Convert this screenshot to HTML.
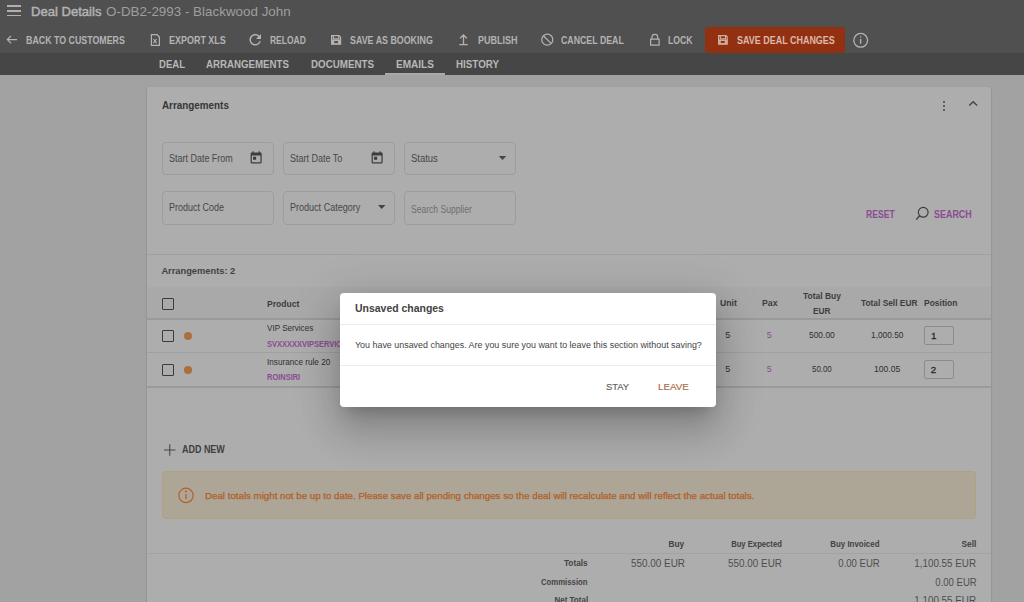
<!DOCTYPE html>
<html><head><meta charset="utf-8">
<style>
*{margin:0;padding:0;box-sizing:border-box}
html,body{width:1024px;height:602px;overflow:hidden}
body{position:relative;background:#a2a2a2;font-family:"Liberation Sans",sans-serif}
.t{position:absolute;white-space:nowrap;line-height:1}
.a{position:absolute}
svg{position:absolute;overflow:visible}
</style></head><body>
<!-- header -->
<div class="a" style="left:0;top:0;width:1024px;height:53px;background:#505050"></div>
<div class="a" style="left:0;top:53px;width:1024px;height:22px;background:#464646"></div>
<div class="a" style="left:385px;top:73px;width:60px;height:2px;background:#a9a9a9"></div>
<!-- hamburger -->
<div class="a" style="left:7px;top:5.2px;width:14px;height:1.6px;background:#b0b0b0"></div>
<div class="a" style="left:7px;top:10.2px;width:14px;height:1.6px;background:#b0b0b0"></div>
<div class="a" style="left:7px;top:14.8px;width:14px;height:1.6px;background:#b0b0b0"></div>
<!-- save button -->
<div class="a" style="left:705px;top:27px;width:140px;height:26px;background:#933012;border-radius:3px"></div>
<!-- toolbar icons -->
<svg style="left:0;top:0" width="1024" height="60" fill="none" stroke="#b3b3b3" stroke-width="1.3">
  <path d="M7.3 39.6 H17 M11 35.9 L7.3 39.6 L11 43.3" stroke-width="1.2"/>
  <path d="M151.4 34.6 H157 L159.4 37 V45.4 H151.4 Z" stroke-width="1.2"/>
  <path d="M153.4 39 L156.6 43.2 M156.6 39 L153.4 43.2" stroke-width="1.1"/>
  <path transform="translate(246.6 31.1) scale(0.72)" fill="#b3b3b3" stroke="none" d="M17.65 6.35C16.2 4.9 14.21 4 12 4c-4.42 0-7.99 3.58-7.99 8s3.57 8 7.99 8c3.73 0 6.84-2.55 7.73-6h-2.08c-.82 2.33-3.04 4-5.65 4-3.31 0-6-2.69-6-6s2.69-6 6-6c1.66 0 3.14.69 4.22 1.78L13 11h7V4l-2.35 2.35z"/>
  <g stroke-width="1.2">
  <path d="M331.6 35.6 H339 L340.6 37.2 V44.2 H331.6 Z"/>
  <path d="M333.3 35.6 V38.8 H338.8 V35.6"/>
  </g>
  <path fill="#b3b3b3" stroke="none" fill-rule="evenodd" d="M331.6 39.6 H340.6 V44.2 H331.6 Z M334.2 41 H338 V43.2 H334.2 Z"/>
  <path d="M463.5 44 V35.2 M460.2 38.3 L463.5 35 L466.8 38.3" stroke-width="1.3"/>
  <path d="M459.3 44.6 H467.7" stroke-width="1.3"/>
  <circle cx="547.3" cy="39.7" r="5.5" stroke-width="1.25"/>
  <path d="M543.6 36 L551 43.4" stroke-width="1.25"/>
  <path d="M650.6 39.1 H659.1 V45.1 H650.6 Z M652 39.1 V37.2 A2.85 2.85 0 0 1 657.7 37.2 V39.1" stroke-width="1.2"/>
  <g stroke="#cdae9e" stroke-width="1.2">
  <path d="M718.6 35.6 H726 L727.2 36.8 V44.2 H718.6 Z"/>
  <path d="M720.3 35.6 V38.8 H725.6 V35.6"/>
  </g>
  <path fill="#cdae9e" stroke="none" fill-rule="evenodd" d="M718.6 39.6 H727.2 V44.2 H718.6 Z M720.8 41 H724.7 V43 H720.8 Z"/>
  <circle cx="860.7" cy="40.3" r="6.9" stroke-width="1.3"/>
  <path d="M860.6 38.9 V43.8" stroke-width="1.4"/>
  <circle cx="860.6" cy="37" r="0.75" fill="#b3b3b3" stroke="none"/>
</svg>

<!-- card -->
<div class="a" style="left:147px;top:87px;width:844px;height:600px;background:#adadad;border-radius:3px;box-shadow:0 1px 2px rgba(0,0,0,0.25)"></div>
<!-- kebab -->
<div class="a" style="left:943px;top:100.5px;width:2px;height:2px;background:#454545;border-radius:50%"></div>
<div class="a" style="left:943px;top:105px;width:2px;height:2px;background:#454545;border-radius:50%"></div>
<div class="a" style="left:943px;top:109.4px;width:2px;height:2px;background:#454545;border-radius:50%"></div>
<svg style="left:0;top:0" width="1024" height="602" fill="none" stroke="#3d3d3d">
  <path d="M969.3 105.6 L973.2 101.7 L977.1 105.6" stroke-width="1.4" stroke="#454545"/>
  <!-- search icon -->
  <circle cx="923.2" cy="212.3" r="4.9" stroke-width="1.2"/>
  <path d="M919.7 215.8 L916.2 219.6" stroke-width="1.4"/>
  <!-- calendars -->
  <path transform="translate(248.75 150.6) scale(0.615)" fill="#3d3d3d" stroke="none" d="M19 3h-1V1h-2v2H8V1H6v2H5c-1.11 0-1.99.9-1.99 2L3 19c0 1.1.89 2 2 2h14c1.1 0 2-.9 2-2V5c0-1.1-.9-2-2-2zm0 16H5V8h14v11zM7 10h5v5H7z"/>
  <path transform="translate(369.75 150.6) scale(0.615)" fill="#3d3d3d" stroke="none" d="M19 3h-1V1h-2v2H8V1H6v2H5c-1.11 0-1.99.9-1.99 2L3 19c0 1.1.89 2 2 2h14c1.1 0 2-.9 2-2V5c0-1.1-.9-2-2-2zm0 16H5V8h14v11zM7 10h5v5H7z"/>
  <!-- dropdown arrows -->
  <path d="M498.8 156.1 L506.2 156.1 L502.5 159.9 Z" fill="#444" stroke="none"/>
  <path d="M378 205.1 L385.4 205.1 L381.7 208.9 Z" fill="#444" stroke="none"/>
  <!-- plus add new -->
  <path d="M164 450 H175.5 M169.75 444.25 V455.75" stroke-width="1.1" stroke="#474747"/>
</svg>
<!-- filter fields -->
<div class="a" style="left:162px;top:142px;width:112px;height:33px;border:1px solid #9d9d9d;border-radius:4px"></div>
<div class="a" style="left:283px;top:142px;width:112px;height:33px;border:1px solid #9d9d9d;border-radius:4px"></div>
<div class="a" style="left:404px;top:142px;width:112px;height:33px;border:1px solid #9d9d9d;border-radius:4px"></div>
<div class="a" style="left:162px;top:191px;width:112px;height:34px;border:1px solid #9d9d9d;border-radius:4px"></div>
<div class="a" style="left:283px;top:191px;width:112px;height:34px;border:1px solid #9d9d9d;border-radius:4px"></div>
<div class="a" style="left:404px;top:191px;width:112px;height:34px;border:1px solid #9d9d9d;border-radius:4px"></div>

<!-- section divider -->
<div class="a" style="left:147px;top:254px;width:844px;height:1px;background:#a0a0a0"></div>
<!-- table header band -->
<div class="a" style="left:147px;top:287px;width:844px;height:32px;background:#a9a9a9"></div>
<div class="a" style="left:147px;top:318px;width:844px;height:2px;background:#9a9a9a"></div>
<div class="a" style="left:147px;top:352px;width:844px;height:1px;background:#a0a0a0"></div>
<div class="a" style="left:147px;top:386px;width:844px;height:2px;background:#9a9a9a"></div>
<!-- checkboxes -->
<div class="a" style="left:162px;top:298px;width:12px;height:12px;border:1.5px solid #3a3a3a;border-radius:1px"></div>
<div class="a" style="left:162px;top:330px;width:12px;height:12px;border:1.5px solid #3a3a3a;border-radius:1px"></div>
<div class="a" style="left:162px;top:364px;width:12px;height:12px;border:1.5px solid #3a3a3a;border-radius:1px"></div>
<div class="a" style="left:184px;top:332px;width:8px;height:8px;background:#ad6e3a;border-radius:50%"></div>
<div class="a" style="left:184px;top:366px;width:8px;height:8px;background:#ad6e3a;border-radius:50%"></div>
<!-- position inputs -->
<div class="a" style="left:924px;top:326px;width:30px;height:19px;border:1px solid #8c8c8c;border-radius:2px"></div>
<div class="a" style="left:924px;top:360px;width:30px;height:19px;border:1px solid #8c8c8c;border-radius:2px"></div>

<!-- warning -->
<div class="a" style="left:162px;top:471px;width:814px;height:48px;background:#ada596;border:1px solid #b0a17f;border-radius:4px"></div>
<svg style="left:0;top:0" width="1024" height="602" fill="none" stroke="#b4612b">
  <circle cx="186" cy="495.4" r="7.2" stroke-width="1.2"/>
  <path d="M186 494 V499" stroke-width="1.3"/>
  <circle cx="186" cy="491.4" r="0.6" fill="#b4612b"/>
</svg>
<!-- totals divider -->
<div class="a" style="left:147px;top:553px;width:844px;height:1px;background:#a3a3a3"></div>

<div class="t" style="left:31.00px;transform-origin:left top;top:6.30px;font-size:12.4px;font-weight:400;color:#b3b3b3;transform:scaleX(1.0549);-webkit-text-stroke:0.45px #b3b3b3;">Deal Details</div><div class="t" style="left:106.00px;transform-origin:left top;top:6.13px;font-size:12.6px;font-weight:400;color:#9f9f9f;transform:scaleX(1.0639);">O-DB2-2993 - Blackwood John</div><div class="t" style="left:26.00px;transform-origin:left top;top:36.03px;font-size:10px;font-weight:700;color:#b3b3b3;transform:scaleX(0.8831);">BACK TO CUSTOMERS</div><div class="t" style="left:169.00px;transform-origin:left top;top:36.03px;font-size:10px;font-weight:700;color:#b3b3b3;transform:scaleX(0.8966);">EXPORT XLS</div><div class="t" style="left:270.00px;transform-origin:left top;top:36.03px;font-size:10px;font-weight:700;color:#b3b3b3;transform:scaleX(0.8468);">RELOAD</div><div class="t" style="left:350.00px;transform-origin:left top;top:36.03px;font-size:10px;font-weight:700;color:#b3b3b3;transform:scaleX(0.8869);">SAVE AS BOOKING</div><div class="t" style="left:477.50px;transform-origin:left top;top:36.03px;font-size:10px;font-weight:700;color:#b3b3b3;transform:scaleX(0.9022);">PUBLISH</div><div class="t" style="left:561.30px;transform-origin:left top;top:36.03px;font-size:10px;font-weight:700;color:#b3b3b3;transform:scaleX(0.8784);">CANCEL DEAL</div><div class="t" style="left:668.30px;transform-origin:left top;top:36.03px;font-size:10px;font-weight:700;color:#b3b3b3;transform:scaleX(0.8672);">LOCK</div><div class="t" style="left:737.00px;transform-origin:left top;top:36.03px;font-size:10px;font-weight:700;color:#d9b9a9;transform:scaleX(0.8965);">SAVE DEAL CHANGES</div><div class="t" style="left:158.70px;transform-origin:left top;top:59.67px;font-size:10.2px;font-weight:700;color:#b8b8b8;transform:scaleX(0.9397);">DEAL</div><div class="t" style="left:206.40px;transform-origin:left top;top:59.67px;font-size:10.2px;font-weight:700;color:#b8b8b8;transform:scaleX(0.9518);">ARRANGEMENTS</div><div class="t" style="left:311.00px;transform-origin:left top;top:59.67px;font-size:10.2px;font-weight:700;color:#b8b8b8;transform:scaleX(0.9608);">DOCUMENTS</div><div class="t" style="left:395.80px;transform-origin:left top;top:59.67px;font-size:10.2px;font-weight:700;color:#b8b8b8;transform:scaleX(0.9845);">EMAILS</div><div class="t" style="left:455.60px;transform-origin:left top;top:59.67px;font-size:10.2px;font-weight:700;color:#b8b8b8;transform:scaleX(0.9631);">HISTORY</div><div class="t" style="left:162.00px;transform-origin:left top;top:100.70px;font-size:10.4px;font-weight:700;color:#363636;transform:scaleX(0.9494);">Arrangements</div><div class="t" style="left:168.80px;transform-origin:left top;top:154.03px;font-size:10px;font-weight:400;color:#474747;transform:scaleX(0.8969);">Start Date From</div><div class="t" style="left:289.80px;transform-origin:left top;top:154.03px;font-size:10px;font-weight:400;color:#474747;transform:scaleX(0.8990);">Start Date To</div><div class="t" style="left:410.80px;transform-origin:left top;top:154.03px;font-size:10px;font-weight:400;color:#474747;transform:scaleX(0.9469);">Status</div><div class="t" style="left:168.80px;transform-origin:left top;top:202.84px;font-size:10px;font-weight:400;color:#474747;transform:scaleX(0.9012);">Product Code</div><div class="t" style="left:289.80px;transform-origin:left top;top:202.84px;font-size:10px;font-weight:400;color:#474747;transform:scaleX(0.9034);">Product Category</div><div class="t" style="left:410.80px;transform-origin:left top;top:204.84px;font-size:10px;font-weight:400;color:#6e6e6e;transform:scaleX(0.8540);">Search Supplier</div><div class="t" style="left:866.00px;transform-origin:left top;top:209.63px;font-size:10px;font-weight:700;color:#8a4c92;transform:scaleX(0.8630);">RESET</div><div class="t" style="left:933.80px;transform-origin:left top;top:209.63px;font-size:10px;font-weight:700;color:#8a4c92;transform:scaleX(0.8951);">SEARCH</div><div class="t" style="left:161.40px;transform-origin:left top;top:266.83px;font-size:9.3px;font-weight:700;color:#424242;">Arrangements: 2</div><div class="t" style="left:267.00px;transform-origin:left top;top:298.57px;font-size:9.6px;font-weight:700;color:#3d3d3d;transform:scaleX(0.8902);">Product</div><div class="t" style="left:267.00px;transform-origin:left top;top:324.18px;font-size:9px;font-weight:400;color:#2f2f2f;transform:scaleX(0.9001);">VIP Services</div><div class="t" style="left:267.00px;transform-origin:left top;top:339.51px;font-size:9.2px;font-weight:700;color:#8a4c92;transform:scaleX(0.8141);">SVXXXXXVIPSERVICES</div><div class="t" style="left:267.00px;transform-origin:left top;top:358.38px;font-size:9px;font-weight:400;color:#2f2f2f;transform:scaleX(0.9093);">Insurance rule 20</div><div class="t" style="left:267.00px;transform-origin:left top;top:373.01px;font-size:9.2px;font-weight:700;color:#8a4c92;transform:scaleX(0.8122);">ROINSIRI</div><div class="t" style="left:720.00px;transform-origin:left top;top:298.07px;font-size:9.6px;font-weight:700;color:#3d3d3d;transform:scaleX(0.8993);">Unit</div><div class="t" style="left:761.50px;transform-origin:left top;top:298.07px;font-size:9.6px;font-weight:700;color:#3d3d3d;transform:scaleX(0.9066);">Pax</div><div class="t" style="left:802.60px;transform-origin:left top;top:290.87px;font-size:9.6px;font-weight:700;color:#3d3d3d;transform:scaleX(0.8829);">Total Buy</div><div class="t" style="left:812.90px;transform-origin:left top;top:305.87px;font-size:9.6px;font-weight:700;color:#3d3d3d;transform:scaleX(0.8608);">EUR</div><div class="t" style="left:860.70px;transform-origin:left top;top:298.07px;font-size:9.6px;font-weight:700;color:#3d3d3d;transform:scaleX(0.8704);">Total Sell EUR</div><div class="t" style="left:924.30px;transform-origin:left top;top:298.07px;font-size:9.6px;font-weight:700;color:#3d3d3d;transform:scaleX(0.8843);">Position</div><div class="t" style="left:725.20px;transform-origin:left top;top:331.08px;font-size:9px;font-weight:400;color:#2f2f2f;">5</div><div class="t" style="left:766.80px;transform-origin:left top;top:331.08px;font-size:9px;font-weight:400;color:#8a4c92;">5</div><div class="t" style="left:808.60px;transform-origin:left top;top:331.08px;font-size:9px;font-weight:400;color:#2f2f2f;transform:scaleX(0.9356);">500.00</div><div class="t" style="left:871.00px;transform-origin:left top;top:331.08px;font-size:9px;font-weight:400;color:#2f2f2f;transform:scaleX(0.9259);">1,000.50</div><div class="t" style="left:931.00px;transform-origin:left top;top:331.40px;font-size:9.8px;font-weight:400;color:#2a2a2a;-webkit-text-stroke:0.3px #2a2a2a;">1</div><div class="t" style="left:725.20px;transform-origin:left top;top:364.78px;font-size:9px;font-weight:400;color:#2f2f2f;">5</div><div class="t" style="left:766.80px;transform-origin:left top;top:364.78px;font-size:9px;font-weight:400;color:#8a4c92;">5</div><div class="t" style="left:811.60px;transform-origin:left top;top:364.78px;font-size:9px;font-weight:400;color:#2f2f2f;transform:scaleX(0.8747);">50.00</div><div class="t" style="left:874.20px;transform-origin:left top;top:364.78px;font-size:9px;font-weight:400;color:#2f2f2f;transform:scaleX(0.9543);">100.05</div><div class="t" style="left:930.80px;transform-origin:left top;top:365.10px;font-size:9.8px;font-weight:400;color:#2a2a2a;-webkit-text-stroke:0.3px #2a2a2a;">2</div><div class="t" style="left:181.70px;transform-origin:left top;top:445.07px;font-size:10.2px;font-weight:700;color:#404040;transform:scaleX(0.8795);">ADD NEW</div><div class="t" style="left:204.60px;transform-origin:left top;top:491.00px;font-size:9.8px;font-weight:400;color:#b0602a;transform:scaleX(0.9917);-webkit-text-stroke:0.25px #b0602a;">Deal totals might not be up to date. Please save all pending changes so the deal will recalculate and will reflect the actual totals.</div><div class="t" style="right:339.40px;transform-origin:right top;top:540.02px;font-size:8.6px;font-weight:700;color:#424242;transform:scaleX(0.9692);">Buy</div><div class="t" style="right:242.00px;transform-origin:right top;top:540.02px;font-size:8.6px;font-weight:700;color:#424242;transform:scaleX(0.8917);">Buy Expected</div><div class="t" style="right:144.60px;transform-origin:right top;top:540.02px;font-size:8.6px;font-weight:700;color:#424242;transform:scaleX(0.9201);">Buy Invoiced</div><div class="t" style="right:47.70px;transform-origin:right top;top:540.02px;font-size:8.6px;font-weight:700;color:#424242;transform:scaleX(0.9640);">Sell</div><div class="t" style="right:436.00px;transform-origin:right top;top:559.32px;font-size:8.6px;font-weight:700;color:#444444;transform:scaleX(0.9624);">Totals</div><div class="t" style="right:436.00px;transform-origin:right top;top:578.42px;font-size:8.6px;font-weight:700;color:#444444;transform:scaleX(0.9054);">Commission</div><div class="t" style="right:436.00px;transform-origin:right top;top:595.72px;font-size:8.6px;font-weight:700;color:#444444;transform:scaleX(0.9335);">Net Total</div><div class="t" style="right:339.40px;transform-origin:right top;top:557.89px;font-size:11px;font-weight:400;color:#4d4d4d;transform:scaleX(0.8991);">550.00 EUR</div><div class="t" style="right:242.00px;transform-origin:right top;top:557.89px;font-size:11px;font-weight:400;color:#4d4d4d;transform:scaleX(0.8991);">550.00 EUR</div><div class="t" style="right:144.60px;transform-origin:right top;top:557.89px;font-size:11px;font-weight:400;color:#4d4d4d;transform:scaleX(0.8670);">0.00 EUR</div><div class="t" style="right:47.70px;transform-origin:right top;top:557.89px;font-size:11px;font-weight:400;color:#4d4d4d;transform:scaleX(0.8955);">1,100.55 EUR</div><div class="t" style="right:47.70px;transform-origin:right top;top:577.19px;font-size:11px;font-weight:400;color:#4d4d4d;transform:scaleX(0.8670);">0.00 EUR</div><div class="t" style="right:47.70px;transform-origin:right top;top:595.19px;font-size:11px;font-weight:400;color:#4d4d4d;transform:scaleX(0.8955);">1,100.55 EUR</div>

<!-- modal -->
<div class="a" style="left:340px;top:293px;width:376px;height:114px;background:#ffffff;border-radius:4px;box-shadow:0 11px 15px -7px rgba(0,0,0,.2),0 24px 38px 3px rgba(0,0,0,.14),0 9px 46px 8px rgba(0,0,0,.12)"></div>
<div class="a" style="left:340px;top:324px;width:376px;height:1px;background:#ebebeb"></div>
<div class="a" style="left:340px;top:365px;width:376px;height:1px;background:#ebebeb"></div>
<div class="t" style="left:355.30px;transform-origin:left top;top:303.36px;font-size:10.8px;font-weight:700;color:#424242;transform:scaleX(0.9687);">Unsaved changes</div><div class="t" style="left:355.30px;transform-origin:left top;top:340.37px;font-size:9.6px;font-weight:400;color:#444444;transform:scaleX(0.9285);">You have unsaved changes. Are you sure you want to leave this section without saving?</div><div class="t" style="left:605.60px;transform-origin:left top;top:382.47px;font-size:9.6px;font-weight:400;color:#5f5f5f;transform:scaleX(0.9791);-webkit-text-stroke:0.15px #5f5f5f;">STAY</div><div class="t" style="left:658.20px;transform-origin:left top;top:382.47px;font-size:9.6px;font-weight:400;color:#a96a46;transform:scaleX(1.0214);-webkit-text-stroke:0.15px #a96a46;">LEAVE</div>
</body></html>
